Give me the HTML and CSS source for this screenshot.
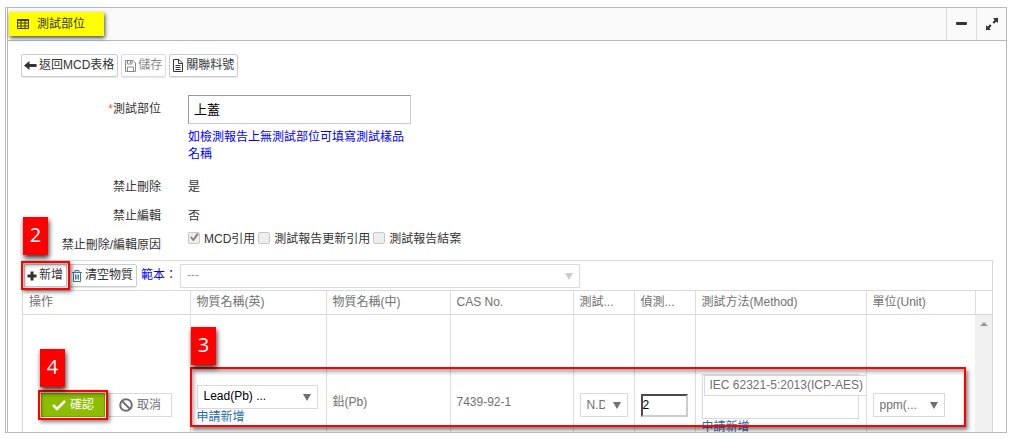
FILE: index.html
```html
<!DOCTYPE html>
<html lang="zh-Hant">
<head>
<meta charset="utf-8">
<title>測試部位</title>
<link rel="stylesheet" href="styles.css">
</head>
<body>
<main class="panel">
  <header class="panel-head">
    <h1 class="panel-title">
      <svg class="icon" width="12" height="12" viewBox="0 0 12 12"><path d="M.5 1.500h11v9H.5zM.5 5h11M.5 8h11M4 3v8M8 3v8" fill="none" stroke="#3d3d00"/><path d="M0 1h12v2H0z" fill="#3d3d00"/></svg>
      測試部位
    </h1>
    <div class="panel-tools">
      <button class="tool" type="button" aria-label="收合"><svg width="12" height="12" viewBox="0 0 12 12"><rect x="0" y="4" width="11" height="3" rx="1" fill="#333"/></svg></button>
      <button class="tool" type="button" aria-label="展開"><svg width="14" height="14" viewBox="0 0 14 14"><path d="M8 1h5v5l-1.600-1.600L9 6.800 7.500 5.200 9.700 3zM1 8l1.700 1.700L5 7.300 6.600 8.800 4.300 11.200 6 13H1z" fill="#333"/></svg></button>
    </div>
  </header>

  <div class="panel-body">
    <div class="actions">
      <button class="btn" type="button"><svg class="icon" width="13" height="12" viewBox="0 0 13 12"><path d="M0 5.500l5.500-4.500v3H12a.7.7 0 0 1 .7.7v1.600a.7.7 0 0 1-.7.7H5.500v3z" fill="#333"/></svg>返回MCD表格</button>
      <button class="btn" type="button" disabled><svg class="icon" width="12" height="12" viewBox="0 0 12 12"><path d="M1.500.5H9L11.500 3v8.500h-10zM3.500.5V4H8V.5M3.500 11.500V7h6v4.500M6.500 1v2" fill="none" stroke="#888"/></svg>儲存</button>
      <button class="btn" type="button"><svg class="icon" width="12" height="13" viewBox="0 0 12 13"><path d="M1.500.5H7l3.500 3.500v8.500h-9zM6.500.5v4h4M3.500 6.500h5M3.500 8.500h5M3.500 10.500h5" fill="none" stroke="#333"/></svg>關聯料號</button>
    </div>

    <form class="form">
      <div class="row row-part">
        <label class="label" for="part"><span class="required">*</span>測試部位</label>
        <div class="field">
          <input class="text-input" id="part" type="text" value="上蓋">
          <p class="help">如檢測報告上無測試部位可填寫測試樣品名稱</p>
        </div>
      </div>
      <div class="row"><span class="label">禁止刪除</span><span class="value">是</span></div>
      <div class="row"><span class="label">禁止編輯</span><span class="value">否</span></div>
      <div class="row">
        <span class="label">禁止刪除/編輯原因</span>
        <div class="checks">
          <label class="check"><input type="checkbox" checked disabled>MCD引用</label>
          <label class="check"><input type="checkbox" disabled>測試報告更新引用</label>
          <label class="check"><input type="checkbox" disabled>測試報告結案</label>
        </div>
      </div>
    </form>

    <section class="grid">
      <div class="toolbar">
        <div class="marked mark-add">
          <button class="btn" type="button"><svg class="icon" width="10" height="10" viewBox="0 0 10 10"><path d="M3.500.5h3v3h3v3h-3v3h-3v-3h-3v-3h3z" fill="#333"/></svg>新增</button>
          <span class="step">2</span>
        </div>
        <button class="btn btn-clear" type="button"><svg class="icon" width="10" height="12" viewBox="0 0 10 12"><path d="M0 2.500h10M3 2.500V.5h4v2M1.500 2.500v9h7v-9M3.500 4.500v5M5 4.500v5M6.500 4.500v5" fill="none" stroke="#44749a"/></svg>清空物質</button>
        <label class="template-label" for="template">範本：</label>
        <span class="select select-template"><select id="template" disabled><option>---</option></select></span>
      </div>

      <table class="table table-head">
        <colgroup><col class="c-act"><col class="c-en"><col class="c-zh"><col class="c-cas"><col class="c-res"><col class="c-lim"><col class="c-met"><col><col class="c-gut"></colgroup>
        <thead><tr><th>操作</th><th>物質名稱(英)</th><th>物質名稱(中)</th><th>CAS No.</th><th>測試...</th><th>偵測...</th><th>測試方法(Method)</th><th>單位(Unit)</th><td></td></tr></thead>
      </table>

      <div class="viewport">
        <table class="table table-rows">
          <colgroup><col class="c-act"><col class="c-en"><col class="c-zh"><col class="c-cas"><col class="c-res"><col class="c-lim"><col class="c-met"><col></colgroup>
          <tbody><tr>
            <td><div class="row-actions">
              <div class="marked mark-confirm">
                <button class="btn-row btn-confirm" type="button"><svg width="14" height="12" viewBox="0 0 14 12"><path d="M1 6l4 4 8-8" fill="none" stroke="#fff" stroke-width="2.500"/></svg>確認</button>
                <span class="step">4</span>
              </div>
              <button class="btn-row" type="button"><svg width="14" height="14" viewBox="0 0 14 14"><circle cx="7" cy="7" r="5.800" fill="none" stroke="#707070" stroke-width="2"/><path d="M3 3l8 8" stroke="#707070" stroke-width="2"/></svg>取消</button>
            </div></td>
            <td><span class="select select-name"><select aria-label="物質名稱"><option>Lead(Pb) ...</option></select></span><a class="link" href="#">申請新增</a></td>
            <td class="text-cell">鉛(Pb)</td>
            <td class="text-cell">7439-92-1</td>
            <td><span class="select select-result"><select aria-label="測試結果"><option>N.D</option></select></span></td>
            <td><input class="limit" type="text" value="2" aria-label="偵測極限"></td>
            <td><div class="multi"><span class="tag">IEC 62321-5:2013(ICP-AES)</span><input class="multi-input" type="text" aria-label="測試方法"></div><a class="link" href="#">申請新增</a></td>
            <td><span class="select select-unit"><select aria-label="單位"><option>ppm(...</option></select></span></td>
          </tr></tbody>
        </table>
        <div class="scrollbar"><span class="scroll-up"></span></div>
        <div class="row-mark"><span class="step">3</span></div>
      </div>
    </section>
  </div>
</main>
</body>
</html>
```
FILE: styles.css
```css
* { box-sizing: border-box; }

body {
  margin: 7px 5px 6px;
  background: #fff;
  color: #333;
  font: 12px/17px "Liberation Sans", "Noto Sans CJK TC", sans-serif;
}

button, input, select { font: inherit; color: inherit; margin: 0; }
h1, p { margin: 0; font: inherit; }
svg { display: block; flex: none; }

.panel { border: 1px solid #bababa; padding-left: 1px; }

.panel-head {
  display: flex;
  justify-content: space-between;
  height: 33px;
  border-left: 1px solid #bababa;
  border-bottom: 1px solid #bababa;
  background: #fafafa;
}
.panel-title {
  display: flex;
  align-items: center;
  gap: 8px;
  width: 95px;
  height: 24px;
  margin: 4px 0 0 1px;
  padding-left: 8px;
  background: #ff0;
  box-shadow: 1px 2px 4px rgba(0, 0, 0, .7);
}
.panel-tools { display: flex; }
.tool {
  display: flex;
  align-items: center;
  justify-content: center;
  width: 30px;
  padding: 0;
  border: 0;
  border-left: 1px solid #dcdcdc;
  background: none;
}

.panel-body { border-left: 1px solid #bababa; padding: 13px 13px 0 14px; }

.actions { display: flex; gap: 3px; margin-left: -1px; }
.btn {
  display: flex;
  align-items: center;
  gap: 2px;
  height: 23px;
  padding: 0 3px 0 2px;
  border: 1px solid #ccc;
  border-radius: 2px;
  background: #fff;
  box-shadow: 0 1px 1px #e4e4e4;
  white-space: nowrap;
}
.btn:disabled { color: #888; border-color: #ddd; }

.form { padding-top: 18px; }
.row { display: flex; gap: 27px; line-height: 29px; height: 29px; }
.row-part { height: auto; margin-bottom: 10px; }
.label { flex: none; width: 139px; text-align: right; }
.required { color: #e8641b; }
.field { width: 223px; }
.text-input {
  display: block;
  width: 100%;
  height: 29px;
  padding: 0 5px;
  border: 1px solid #ccc;
  border-top-color: #999;
  border-left-color: #999;
  color: #000;
  font-size: 13px;
}
.help { padding-top: 5px; width: 216px; color: #00f; line-height: 17px; }

.checks { display: flex; gap: 4px; line-height: 17px; }
.check { display: flex; align-items: center; gap: 4px; height: 17px; }
.check + .check { margin-left: -1px; }
.check input {
  appearance: none;
  width: 12px;
  height: 12px;
  margin-bottom: 4px;
  border: 1px solid #c8c8c8;
  border-radius: 2px;
  background: #eee;
}
.check input:checked::before {
  content: "";
  display: block;
  width: 10px;
  height: 10px;
  background: #888;
  clip-path: polygon(10% 50%, 25% 38%, 42% 60%, 80% 5%, 98% 18%, 45% 90%);
}

.grid { border: 1px solid #d9d9d9; border-bottom: 0; }
.toolbar { display: flex; align-items: center; height: 29px; padding-left: 1px; }
.btn-clear { margin-left: 2px; gap: 3px; }
.template-label { flex: none; margin-left: 4px; width: 39px; color: #00f; white-space: nowrap; }

.select { position: relative; display: block; }
.select select {
  display: block;
  appearance: none;
  width: 100%;
  height: 24px;
  padding: 0 22px 0 6px;
  border: 1px solid #d9d9d9;
  border-radius: 0;
  background: #fff;
  opacity: 1;
}
.select::after {
  content: "";
  position: absolute;
  right: 7px;
  top: 9px;
  border: 4px solid transparent;
  border-top: 7px solid #707070;
  border-bottom: 0;
  pointer-events: none;
}
.select-template { width: 400px; color: #999; }
.select-template::after { border-top-color: #ccc; }
.select-name { width: 121px; color: #000; }
.select-unit { width: 72px; }

.table { border-collapse: collapse; table-layout: fixed; width: 100%; color: #707070; }
.c-act { width: 167px; }
.c-en { width: 136px; }
.c-zh { width: 124px; }
.c-cas { width: 123px; }
.c-res, .c-lim { width: 61px; }
.c-met { width: 171px; }
.c-gut { width: 17px; }
.table th, .table td {
  padding: 0 6px;
  border-left: 1px solid #ddd;
  text-align: left;
  font-weight: normal;
  white-space: nowrap;
  overflow: hidden;
}
.table th:first-child, .table td:first-child { border-left: 0; }
.table-head tr { height: 24px; border-top: 1px solid #d9d9d9; border-bottom: 1px solid #d9d9d9; }
.table-rows { flex: 1; min-width: 0; }
.table-rows tr { height: 180px; }
.table .text-cell { padding-bottom: 6px; }

.viewport { position: relative; display: flex; align-items: flex-start; height: 117px; overflow: hidden; }
.scrollbar { align-self: stretch; width: 17px; padding: 7px 0 0 5px; background: #f0f0f0; }
.scroll-up { display: block; width: 8px; border: 4px solid transparent; border-top: 0; border-bottom-color: #999; }

.row-actions { display: flex; gap: 3px; padding-left: 12px; }
.btn-row {
  display: flex;
  align-items: center;
  justify-content: center;
  gap: 4px;
  width: 64px;
  height: 24px;
  padding: 0;
  border: 1px solid #d9d9d9;
  background: #fff;
}
.btn-confirm { border-color: #7aa300; background: #8ebc00; color: #fff; }
.link { display: block; color: #2a6ca8; text-decoration: none; }
.limit {
  display: block;
  width: 47px;
  height: 23px;
  padding: 0;
  border: 2px solid #ccc;
  border-top-color: #4a4a4a;
  border-left-color: #4a4a4a;
  color: #000;
}
.multi { width: 157px; border: 1px solid #d9d9d9; }
.tag {
  display: block;
  width: 170px;
  height: 21px;
  margin-left: 1px;
  padding-left: 5px;
  border: 1px solid #d9d9d9;
  background: #fff;
  line-height: 19px;
}
.multi-input { display: block; width: 100%; height: 22px; border: 0; padding: 0 4px; background: none; }

/* Numbered walkthrough marks laid over the controls */
.marked { position: relative; }
.marked::after {
  content: "";
  position: absolute;
  inset: -3px;
  border: 2px solid #f00;
  box-shadow: 2px 2px 4px rgba(0, 0, 0, .5), inset 1px 2px 4px rgba(0, 0, 0, .4);
  pointer-events: none;
}
.row-mark {
  position: absolute;
  left: 167px;
  right: 26px;
  top: 52px;
  height: 60px;
  border: 2px solid #f00;
  box-shadow: 2px 3px 4px rgba(0, 0, 0, .5), inset 2px 3px 4px rgba(0, 0, 0, .35);
  pointer-events: none;
}
.step {
  position: absolute;
  left: -1px;
  bottom: calc(100% + 4px);
  z-index: 1;
  width: 25px;
  height: 38px;
  background: #f00;
  box-shadow: 1px 3px 5px rgba(0, 0, 0, .8);
  color: #fff;
  font: 20px/36px "Open Sans", "Noto Sans", sans-serif;
  text-align: center;
}
.mark-add .step { bottom: calc(100% + 9px); }
.mark-confirm .step { bottom: calc(100% + 6px); }
```
